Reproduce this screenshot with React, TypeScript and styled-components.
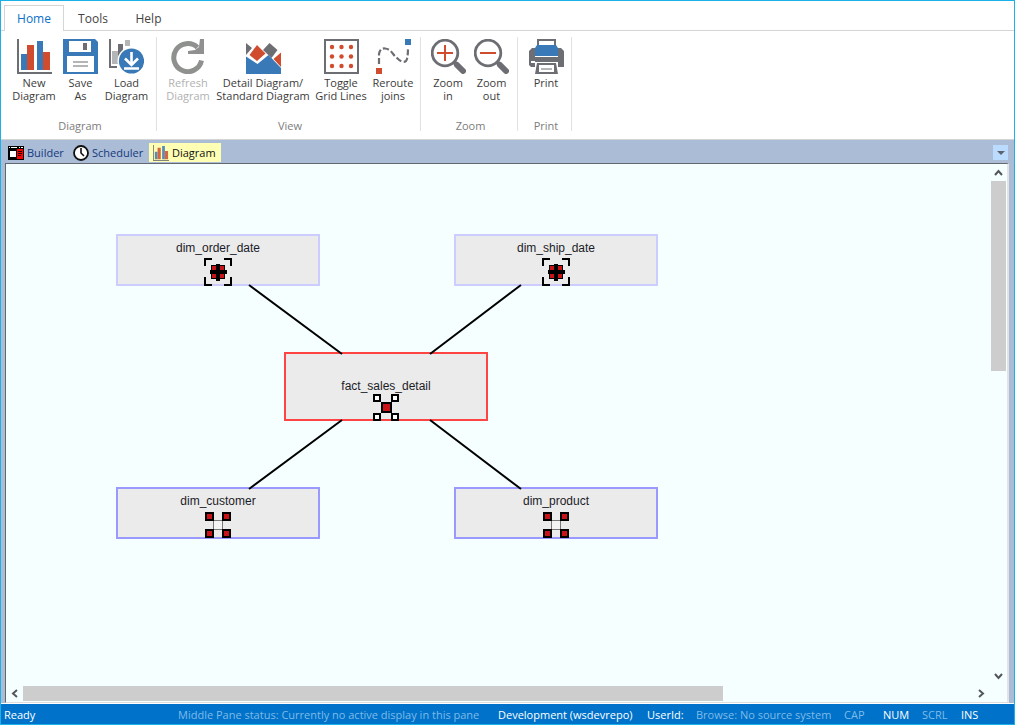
import React from "react";
import styled, { createGlobalStyle } from "styled-components";

const BLUE = "#3a79b7";
const RED = "#d04c2f";
const GREY = "#6d6e73";
const LIGHT = "#b4b5b7";

const GlobalStyle = createGlobalStyle`
  * { box-sizing: border-box; }
  body {
    margin: 0;
    font-family: "Open Sans", "Noto Sans", sans-serif;
    font-size: 11px;
    color: #444;
  }
  button {
    font: inherit;
    color: inherit;
    background: none;
    border: 0;
    padding: 0;
    white-space: nowrap;
  }
`;

const Window = styled.div`
  display: flex;
  flex-direction: column;
  min-height: 100vh;
  border: 1px solid #1ab0e8;
  background: #fff;
`;

const MenuTabs = styled.nav`
  display: flex;
  height: 30px;
  padding: 4px 3px 0;
  border-bottom: 1px solid #d5d5d5;
  font-size: 12px;
`;

const MenuTab = styled.button<{ $active?: boolean; $width: number }>`
  width: ${(p) => p.$width}px;
  height: 26px;
  margin-bottom: -1px;
  border: 1px solid ${(p) => (p.$active ? "#d5d5d5" : "transparent")};
  border-bottom: 0;
  background: ${(p) => (p.$active ? "#fff" : "transparent")};
  color: ${(p) => (p.$active ? "#0e70c8" : "#444")};
`;

const Ribbon = styled.div`
  display: flex;
  height: 109px;
  padding: 6px 0 8px;
  border-bottom: 1px solid #d5d5d5;
`;

const RibbonGroup = styled.section`
  display: flex;
  flex-direction: column;
  justify-content: space-between;
  padding: 2px 3px 0 6px;
  border-right: 1px solid #e1e1e1;
`;

const GroupItems = styled.div`
  display: flex;
`;

const GroupName = styled.div`
  height: 14px;
  line-height: 14px;
  margin-bottom: -2px;
  text-align: center;
  color: #7d7d7d;
`;

const ToolButton = styled.button<{ $width: number }>`
  display: flex;
  flex-direction: column;
  align-items: center;
  gap: 2px;
  width: ${(p) => p.$width}px;
  line-height: 13px;
  color: #3c3c3c;
  &:disabled { color: #b1b1b1; }
`;

const ToolLabel = styled.span`
  display: flex;
  flex-direction: column;
  align-items: center;
`;

const Workspace = styled.main`
  flex: 1;
  display: flex;
  flex-direction: column;
  background: #abbcd7;
`;

const DocTabs = styled.div`
  display: flex;
  align-items: center;
  height: 23px;
  padding: 2px 6px 0 3px;
`;

const DocTab = styled.button<{ $active?: boolean; $width: number }>`
  display: flex;
  align-items: center;
  gap: 3px;
  width: ${(p) => p.$width}px;
  height: 19px;
  padding-left: 4px;
  background: ${(p) => (p.$active ? "#ffffb3" : "transparent")};
  color: ${(p) => (p.$active ? "#111" : "#123a7c")};
`;

const TabMenu = styled.button`
  display: flex;
  align-items: center;
  justify-content: center;
  width: 15px;
  height: 15px;
  margin-left: auto;
  background: #bbdcff;
`;

const Pane = styled.div`
  flex: 1;
  display: grid;
  grid-template-columns: 1fr 17px;
  grid-template-rows: 1fr 17px;
  margin: 0 5px 0 4px;
  border: 1px solid #63676f;
  border-right: 2px solid #e3e3e3;
  border-bottom-color: #dcdcdc;
  background: #f5ffff;
`;

const Canvas = styled.div`
  position: relative;
  overflow: hidden;
`;

const Joins = styled.svg`
  position: absolute;
  left: 0;
  top: 0;
`;

const Entity = styled.div<{ $x: number; $y: number; $tall?: boolean; $color: string }>`
  position: absolute;
  left: ${(p) => p.$x}px;
  top: ${(p) => p.$y}px;
  display: flex;
  flex-direction: column;
  align-items: center;
  justify-content: flex-end;
  gap: ${(p) => (p.$tall ? 0 : 3)}px;
  width: 204px;
  height: ${(p) => (p.$tall ? 69 : 52)}px;
  border: 2px solid ${(p) => p.$color};
  background: #ebebeb;
  color: #1c1c28;
  font: 12px/14px "Liberation Sans", Arial, sans-serif;
  svg { margin-bottom: -2px; }
`;

const ScrollTrack = styled.div<{ $vertical?: boolean }>`
  display: flex;
  flex-direction: ${(p) => (p.$vertical ? "column" : "row")};
  justify-content: space-between;
`;

const ScrollThumb = styled.div<{ $vertical?: boolean }>`
  background: #cdcdcd;
  ${(p) =>
    p.$vertical
      ? "width: 15px; height: 190px; margin: 0 1px auto 1px;"
      : "height: 15px; width: 700px; margin: 1px auto 1px 0; flex-shrink: 1;"}
`;

const ScrollButton = styled.button`
  display: flex;
  align-items: center;
  justify-content: center;
  flex: none;
  width: 17px;
  height: 17px;
`;

const StatusBar = styled.footer`
  display: flex;
  align-items: center;
  height: 21px;
  padding: 0 35px 0 3px;
  border-top: 1px solid #fff;
  background: #0072c9;
  color: #fff;
  white-space: nowrap;
`;

const StatusItem = styled.span<{ $muted?: boolean; $width?: number; $push?: boolean }>`
  width: ${(p) => (p.$width ? `${p.$width}px` : "auto")};
  margin-left: ${(p) => (p.$push ? "auto" : "0")};
  color: ${(p) => (p.$muted ? "#7fbbe8" : "#fff")};
`;

const Icon = ({ children }: { children: React.ReactNode }) => (
  <svg width="35" height="35" viewBox="0 0 35 35" fill="none" aria-hidden="true">
    {children}
  </svg>
);

const Bars = () => (
  <>
    <path d="M0 0h2v33h33v2H0z" fill={GREY} />
    <path d="M4 15h6v16H4zM20 2h6v29h-6z" fill={BLUE} />
    <path d="M10 6h7v25h-7zM26 13h7v18h-7z" fill={RED} />
  </>
);

const SaveIcon = () => (
  <Icon>
    <path d="M0 0h32l3 3v32H0z" fill={BLUE} />
    <path d="M6 2h22v11H6zM4 17h27v16H4z" fill="#fff" />
    <path d="M20 4h4v7h-4z" fill={GREY} />
    <path d="M10 22h15v2H10zM10 26h15v2H10z" fill={LIGHT} />
  </Icon>
);

const LoadIcon = () => (
  <Icon>
    <path d="M0 0h2v27h6v2H0z" fill={GREY} />
    <path d="M3 12h6v13H3zM16 1h5v6h-5z" fill={LIGHT} />
    <path d="M9 5h5v9l-5 4z" fill={GREY} />
    <circle cx="22.500" cy="22" r="14" fill="#fff" />
    <circle cx="22.500" cy="22" r="12.600" fill={BLUE} />
    <path d="M22.500 13v12M16 19.500l6.500 6.500 6.500-6.500M15 29.500h15" stroke="#fff" strokeWidth="2.600" />
  </Icon>
);

const RefreshIcon = () => (
  <Icon>
    <path d="M30.500 21.500A14 14 0 1 1 26.500 8.500" stroke="#8f918e" strokeWidth="5" />
    <path d="M29 0h4v15H17v-3l7-1 4-3z" fill="#8f918e" />
  </Icon>
);

const DetailIcon = () => (
  <Icon>
    <path d="M0 4l6 5-6 7zM23.500 4l8 7-6 8-8.500-8z" fill={GREY} />
    <path d="M11 6l8.500 8.500L11 22l-7.500-6zM35 13.500V28l-7.500-8z" fill={RED} />
    <path d="M0 17.500L11.500 25 22.500 16 35 29v6H0z" fill={BLUE} />
  </Icon>
);

const GridIcon = () => (
  <Icon>
    <path d="M1 1h33v33H1z" stroke={GREY} strokeWidth="2" />
    {[8, 17.5, 27].map((x) =>
      [8, 17.5, 27].map((y) => <circle key={`${x}-${y}`} cx={x} cy={y} r="2.200" fill={RED} />)
    )}
  </Icon>
);

const RerouteIcon = () => (
  <Icon>
    <path d="M0 29h6v6H0z" fill={RED} />
    <path d="M29 0h6v6h-6z" fill={BLUE} />
    <path
      d="M3 25V15Q4 9 9 9.500C15 10 17 16 21 19C24 22 27 24 30 22Q32 20 32 8"
      stroke={GREY}
      strokeWidth="2.200"
      strokeDasharray="6 2.500"
    />
  </Icon>
);

const ZoomIcon = ({ plus }: { plus?: boolean }) => (
  <Icon>
    <circle cx="14" cy="14" r="12.800" stroke={GREY} strokeWidth="2.800" />
    <path d="M23 23l3 3" stroke={GREY} strokeWidth="4" />
    <path d="M26 26l6 6" stroke={GREY} strokeWidth="6" strokeLinecap="round" />
    <path d={plus ? "M6 14h16M14 6v16" : "M6 14h16"} stroke={RED} strokeWidth="2" />
  </Icon>
);

const PrintIcon = () => (
  <Icon>
    <path d="M9 8V1h17v7" stroke={GREY} strokeWidth="2" />
    <path d="M3 9h3v9h23V9h3l3 3v16h-6v-5H6v5H2l-2-2V12z" fill={GREY} />
    <path d="M8 6h19l2 3v8H6V9z" fill={BLUE} />
    <path d="M2 22h4v2H2z" fill="#fff" />
    <path d="M8 24h19l2 11H6z" fill={GREY} />
    <path d="M10 26h15v7H10z" fill="#fff" />
    <path d="M12 29h11v2H12z" fill={LIGHT} />
  </Icon>
);

const RefIcon = () => (
  <svg width="28" height="28" viewBox="0 0 28 28" fill="none" aria-hidden="true">
    <path d="M1 8V1h7M20 1h7v7M27 19v8h-7M8 27H1v-8" stroke="#000" strokeWidth="2" />
    <path d="M7 7h14v14H7z" fill="#000" />
    <path d="M8 8h12v12H8z" fill="#c81418" />
    <path d="M14 6v17M6 14h17" stroke="#000" strokeWidth="4" />
  </svg>
);

const FactIcon = () => (
  <svg width="28" height="28" viewBox="0 0 28 28" aria-hidden="true">
    <g fill="#fff" stroke="#000" strokeWidth="2">
      <path d="M2 2h6v6H2zM20 2h6v6h-6zM2 21h6v6H2zM20 21h6v6h-6z" />
      <path d="M9 9l2 2M19 9l-2 2M9 20l2-2M19 20l-2-2" strokeWidth="1" stroke="#888" />
      <path d="M10 10h9v9h-9z" fill="#c81418" />
    </g>
  </svg>
);

const DimensionIcon = () => (
  <svg width="28" height="28" viewBox="0 0 28 28" aria-hidden="true">
    <path d="M9.500 9.500h9v9h-9z" fill="#f4f4f4" stroke="#777" />
    <path
      d="M2 2h7v7H2zM19 2h7v7h-7zM2 19h7v7H2zM19 19h7v7h-7z"
      fill="#c81418"
      stroke="#000"
      strokeWidth="2"
    />
  </svg>
);

const BuilderIcon = () => (
  <svg width="16" height="16" viewBox="0 0 16 16" aria-hidden="true">
    <path d="M0 1h16v14H0z" fill="#000" />
    <path d="M1 2h1v1H1zM3 2h6v1H3zM11 2h1v1h-1zM13 2h2v1h-2z" fill="#fff" />
    <path d="M9 4h6v10H9z" fill="#f00" />
    <path d="M2 6h6v6H2z" fill="#fff" />
    <path d="M10 6h4v1h-4zM10 8h4v1h-4zM10 10h3v1h-3z" fill="#300" />
  </svg>
);

const ClockIcon = () => (
  <svg width="16" height="16" viewBox="0 0 16 16" fill="none" aria-hidden="true">
    <circle cx="8" cy="8" r="7" fill="#fff" stroke="#111" strokeWidth="1.800" />
    <path d="M8 3v5l3 3" stroke="#111" strokeWidth="1.600" />
  </svg>
);

const SmallBars = () => (
  <svg width="16" height="16" viewBox="0 0 35 35" opacity="0.850" aria-hidden="true">
    <Bars />
  </svg>
);

const Chevron = ({ d }: { d: string }) => (
  <svg width="9" height="9" viewBox="0 0 9 9" fill="none" aria-hidden="true">
    <path d={d} stroke="#55565a" strokeWidth="2" />
  </svg>
);

interface Tool {
  lines: string[];
  width: number;
  icon: React.ReactNode;
  disabled?: boolean;
}

const groups: { name: string; tools: Tool[] }[] = [
  {
    name: "Diagram",
    tools: [
      { lines: ["New", "Diagram"], width: 54, icon: <Icon><Bars /></Icon> },
      { lines: ["Save", "As"], width: 39, icon: <SaveIcon /> },
      { lines: ["Load", "Diagram"], width: 53, icon: <LoadIcon /> },
    ],
  },
  {
    name: "View",
    tools: [
      { lines: ["Refresh", "Diagram"], width: 50, icon: <RefreshIcon />, disabled: true },
      { lines: ["Detail Diagram/", "Standard Diagram"], width: 100, icon: <DetailIcon /> },
      { lines: ["Toggle", "Grid Lines"], width: 56, icon: <GridIcon /> },
      { lines: ["Reroute", "joins"], width: 48, icon: <RerouteIcon /> },
    ],
  },
  {
    name: "Zoom",
    tools: [
      { lines: ["Zoom", "in"], width: 42, icon: <ZoomIcon plus /> },
      { lines: ["Zoom", "out"], width: 45, icon: <ZoomIcon /> },
    ],
  },
  { name: "Print", tools: [{ lines: ["Print"], width: 44, icon: <PrintIcon /> }] },
];

const entities = [
  { name: "dim_order_date", x: 110, y: 70, color: "#ccccff", icon: <RefIcon /> },
  { name: "dim_ship_date", x: 448, y: 70, color: "#ccccff", icon: <RefIcon /> },
  { name: "fact_sales_detail", x: 278, y: 188, color: "#ff4444", icon: <FactIcon />, tall: true },
  { name: "dim_customer", x: 110, y: 323, color: "#9999ff", icon: <DimensionIcon /> },
  { name: "dim_product", x: 448, y: 323, color: "#9999ff", icon: <DimensionIcon /> },
];

export default function App() {
  return (
    <>
      <GlobalStyle />
      <Window>
        <MenuTabs>
          <MenuTab $active $width={60}>Home</MenuTab>
          <MenuTab $width={58}>Tools</MenuTab>
          <MenuTab $width={53}>Help</MenuTab>
        </MenuTabs>
        <Ribbon>
          {groups.map((group) => (
            <RibbonGroup key={group.name}>
              <GroupItems>
                {group.tools.map((tool) => (
                  <ToolButton key={tool.lines.join(" ")} $width={tool.width} disabled={tool.disabled}>
                    {tool.icon}
                    <ToolLabel>
                      {tool.lines.map((line) => (
                        <span key={line}>{line}</span>
                      ))}
                    </ToolLabel>
                  </ToolButton>
                ))}
              </GroupItems>
              <GroupName>{group.name}</GroupName>
            </RibbonGroup>
          ))}
        </Ribbon>
        <Workspace>
          <DocTabs>
            <DocTab $width={65}><BuilderIcon />Builder</DocTab>
            <DocTab $width={80}><ClockIcon />Scheduler</DocTab>
            <DocTab $active $width={72}><SmallBars />Diagram</DocTab>
            <TabMenu aria-label="Open panes">
              <svg width="8" height="4" viewBox="0 0 8 4" aria-hidden="true">
                <path d="M0 0h8L4 4z" fill="#5d6470" />
              </svg>
            </TabMenu>
          </DocTabs>
          <Pane>
            <Canvas>
              {entities.map((e) => (
                <Entity key={e.name} $x={e.x} $y={e.y} $color={e.color} $tall={e.tall}>
                  {e.name}
                  {e.icon}
                </Entity>
              ))}
              <Joins width="700" height="400" fill="none" stroke="#000" strokeWidth="2" aria-hidden="true">
                <path d="M243 121L336 190M515 121L424 190M336 256L243 325M424 256L515 325" />
              </Joins>
            </Canvas>
            <ScrollTrack $vertical>
              <ScrollButton aria-label="Scroll up"><Chevron d="M1 7l3.500-4L8 7" /></ScrollButton>
              <ScrollThumb $vertical />
              <ScrollButton aria-label="Scroll down"><Chevron d="M1 2l3.500 4L8 2" /></ScrollButton>
            </ScrollTrack>
            <ScrollTrack>
              <ScrollButton aria-label="Scroll left"><Chevron d="M7 1L3 4.500 7 8" /></ScrollButton>
              <ScrollThumb />
              <ScrollButton aria-label="Scroll right"><Chevron d="M2 1l4 3.500L2 8" /></ScrollButton>
            </ScrollTrack>
          </Pane>
        </Workspace>
        <StatusBar>
          <StatusItem>Ready</StatusItem>
          <StatusItem $muted $push $width={320}>Middle Pane status: Currently no active display in this pane</StatusItem>
          <StatusItem $width={149}>Development (wsdevrepo)</StatusItem>
          <StatusItem $width={49}>UserId:</StatusItem>
          <StatusItem $muted $width={148}>Browse: No source system</StatusItem>
          <StatusItem $muted $width={39}>CAP</StatusItem>
          <StatusItem $width={39}>NUM</StatusItem>
          <StatusItem $muted $width={39}>SCRL</StatusItem>
          <StatusItem $width={18}>INS</StatusItem>
        </StatusBar>
      </Window>
    </>
  );
}
